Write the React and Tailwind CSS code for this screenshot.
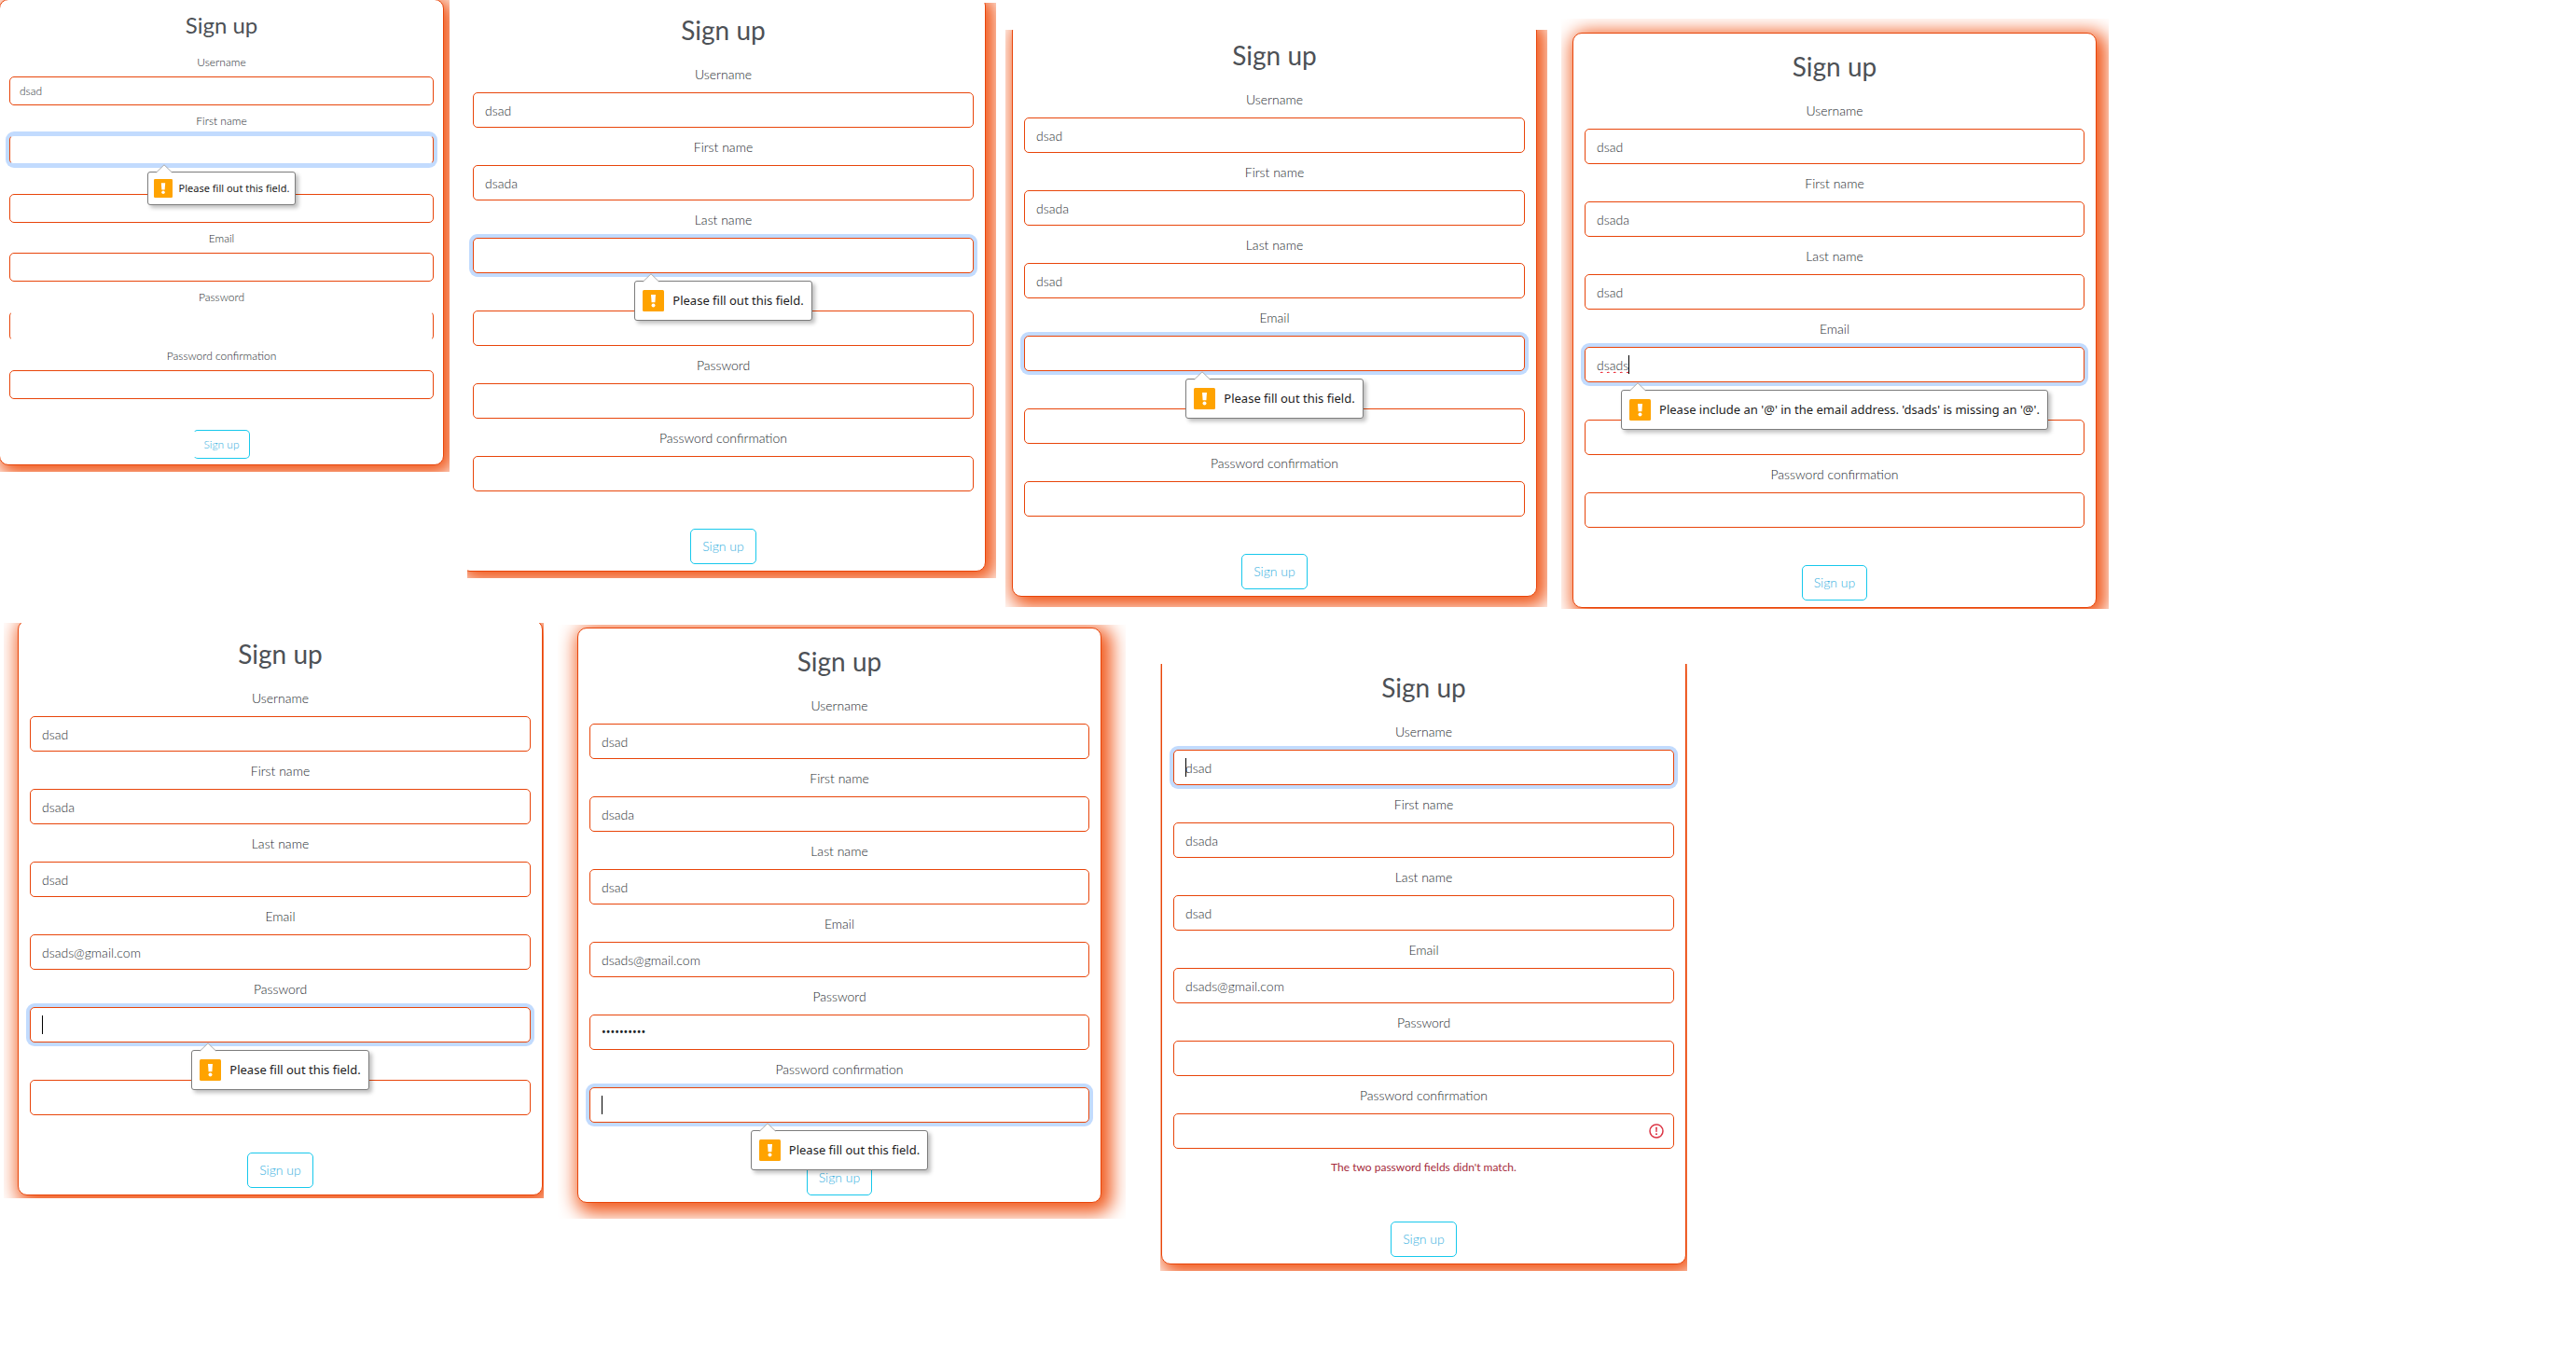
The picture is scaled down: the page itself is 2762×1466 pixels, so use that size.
const FIELDS = [
  { name: "username", label: "Username", type: "text" },
  { name: "first", label: "First name", type: "text" },
  { name: "last", label: "Last name", type: "text" },
  { name: "email", label: "Email", type: "text" },
  { name: "password", label: "Password", type: "password" },
  { name: "confirm", label: "Password confirmation", type: "password" },
];

const SIZES = {
  regular: {
    card: "px-3 pt-4 pb-[7px]",
    heading: "mb-[17px] text-[28px] leading-[38px]",
    label: "mb-[7px] text-sm leading-6",
    input: "h-[38px] px-3 text-sm",
    gap: "mb-[9px]",
    submitGap: "mt-10",
    button: "h-[38px] px-3 text-sm",
    tip: "h-[43px] gap-[9px] px-2 text-[13px]",
    tipIcon: "size-[23px]",
  },
  compact: {
    card: "px-[10px] pt-3 pb-[6px]",
    heading: "mb-[15px] text-2xl leading-[30px]",
    label: "mb-[5px] text-xs leading-5",
    input: "h-[31px] px-[10px] text-xs",
    gap: "mb-[7px]",
    submitGap: "mt-[33px]",
    button: "h-[31px] px-[10px] text-xs",
    tip: "h-9 gap-[7px] px-[6px] text-[11px]",
    tipIcon: "size-5",
  },
};

const FILL_OUT = "Please fill out this field.";

function Tooltip({ text, size }) {
  return (
    <div className="pointer-events-none absolute inset-x-0 top-full z-10 flex justify-center pt-2">
      <div
        role="alert"
        className={`relative flex items-center whitespace-nowrap rounded-[3px] border border-[#7d7d7d] bg-white font-['Noto_Sans',sans-serif] text-[#1c1c1c] shadow-[3px_3px_4px_rgba(0,0,0,0.25)] ${size.tip}`}
      >
        <svg className="absolute -top-[9px] left-2 h-[10px] w-[18px]" viewBox="0 0 18 10" aria-hidden="true">
          <path d="M0.5 9 L9 0.8 L17.5 9 V10 H0.5 Z" fill="#fff" />
          <path d="M0.5 9 L9 0.8 L17.5 9" fill="none" stroke="#a9a9a9" strokeWidth="1" />
        </svg>
        <svg className={`mb-px shrink-0 ${size.tipIcon}`} viewBox="0 0 23 23" aria-hidden="true">
          <rect width="23" height="23" rx="1.5" fill="#ffa300" />
          <path d="M9 5h5l-0.6 8.2h-3.8z" fill="#fff" />
          <circle cx="11.5" cy="16.5" r="2" fill="#fff" />
        </svg>
        <span>{text}</span>
      </div>
    </div>
  );
}

function Field({ formId, field, size, value, focused, caret, misspelled, tip, error, inputClass, covered, last }) {
  const id = `${formId}-${field.name}`;
  return (
    <div className={last ? "" : size.gap}>
      <label
        htmlFor={id}
        className={`block text-center font-light text-[#24292e] ${size.label} ${covered ? "invisible" : ""}`}
      >
        {field.label}
      </label>
      <div className="relative">
        <input
          id={id}
          name={field.name}
          type={field.type}
          defaultValue={value}
          spellCheck={false}
          className={[
            "block w-full rounded-[5px] border border-[#e8450a] bg-white outline-none",
            size.input,
            field.type === "password" ? "font-['Roboto',sans-serif] text-base text-[#212529]" : "font-light text-[#2b3035]",
            focused ? "shadow-[0_0_0_4px_#c2dbfe]" : "",
            misspelled ? "leading-6 underline decoration-red-600 decoration-wavy decoration-1" : "",
            inputClass || "",
          ].join(" ")}
        />
        {caret && <span className={`absolute top-[9px] h-5 w-px bg-black ${caret}`} />}
        {error && (
          <svg className="absolute top-[11px] right-[11px] size-4" viewBox="0 0 16 16" fill="none" aria-hidden="true">
            <circle cx="8" cy="8" r="7" stroke="#dc3545" strokeWidth="1.5" />
            <path d="M7.1 3.8h1.8l-0.3 5.2h-1.2z" fill="#dc3545" />
            <circle cx="8" cy="11.2" r="1" fill="#dc3545" />
          </svg>
        )}
        {tip && <Tooltip text={tip} size={size} />}
      </div>
      {error && <p className="pt-2 pb-[6px] text-center text-xs leading-6 text-[#a52a3c]">{error}</p>}
    </div>
  );
}

function SignUpForm({ id, variant = "regular", className = "", values = {}, states = {}, buttonClass = "" }) {
  const size = SIZES[variant];
  return (
    <form
      className={`rounded-[10px] border border-[#e8450a] bg-white shadow-[5px_5px_20px_6px_#f1581b] ${size.card} ${className}`}
      onSubmit={(e) => e.preventDefault()}
    >
      <h2 className={`text-center font-normal text-[#4d5156] ${size.heading}`}>Sign up</h2>
      {FIELDS.map((field, i) => (
        <Field
          key={field.name}
          formId={id}
          field={field}
          size={size}
          value={values[field.name] || ""}
          covered={i > 0 && Boolean(states[FIELDS[i - 1].name]?.tip)}
          last={i === FIELDS.length - 1}
          {...states[field.name]}
        />
      ))}
      <div className={`flex justify-center ${size.submitGap}`}>
        <button
          type="submit"
          className={`rounded-[5px] border border-[#17c8ec] bg-white font-light text-[#38b0e0] ${size.button} ${buttonClass}`}
        >
          Sign up
        </button>
      </div>
    </form>
  );
}

export default function App() {
  const name = { username: "dsad", first: "dsada", last: "dsad" };
  const full = { ...name, email: "dsads@gmail.com" };
  return (
    <main className="min-h-screen bg-white font-['Lato',sans-serif]">
      <div className="grid grid-cols-[501fr_577fr_596fr_587fr_501fr] items-start">
        <section className="mr-[19px] min-w-0 overflow-hidden pr-[6px] pb-[7px]">
          <SignUpForm
            id="f1"
            variant="compact"
            className="-mt-px -ml-px"
            values={{ username: "dsad" }}
            states={{
              first: { focused: true, tip: FILL_OUT, inputClass: "border-y-[#c2dbfe]" },
              password: { inputClass: "border-y-transparent" },
            }}
            buttonClass="border-l-transparent"
          />
        </section>
        <section className="mt-[3px] mr-[10px] min-w-0 overflow-hidden pr-[11px] pb-[7px]">
          <SignUpForm
            id="f2"
            className="-mt-[7px] -ml-[7px]"
            values={{ username: "dsad", first: "dsada" }}
            states={{ last: { focused: true, tip: FILL_OUT } }}
          />
        </section>
        <section className="mt-8 mr-[15px] min-w-0 overflow-hidden pr-[11px] pb-[11px] pl-[7px]">
          <SignUpForm id="f3" className="-mt-[9px]" values={name} states={{ email: { focused: true, tip: FILL_OUT } }} />
        </section>
        <section className="mt-5 min-w-0 overflow-hidden pt-[15px] pr-[13px] pb-px pl-3">
          <SignUpForm
            id="f4"
            values={{ ...name, email: "dsads" }}
            states={{
              email: {
                focused: true,
                misspelled: true,
                caret: "left-[47px]",
                tip: "Please include an '@' in the email address. 'dsads' is missing an '@'.",
              },
            }}
          />
        </section>
      </div>
      <div className="mt-[15px] grid grid-cols-[598fr_646fr_565fr_953fr] items-start">
        <section className="mr-[15px] ml-1 min-w-0 overflow-hidden pr-px pb-[3px] pl-[15px]">
          <SignUpForm
            id="f5"
            className="-mt-[3px]"
            values={full}
            states={{ password: { focused: true, caret: "left-[13px]", tip: FILL_OUT } }}
          />
        </section>
        <section className="mt-[2px] mr-[37px] min-w-0 overflow-hidden pt-[3px] pr-[26px] pb-[17px] pl-[21px]">
          <SignUpForm
            id="f6"
            values={{ ...full, password: "dsadsadsad" }}
            states={{ confirm: { focused: true, caret: "left-[13px]", tip: FILL_OUT } }}
          />
        </section>
        <section className="mt-11 min-w-0 overflow-hidden px-px pb-[7px]">
          <SignUpForm
            id="f7"
            className="-mt-[11px]"
            values={full}
            states={{
              username: { focused: true, caret: "left-[13px]" },
              confirm: { error: "The two password fields didn't match." },
            }}
          />
        </section>
      </div>
    </main>
  );
}
